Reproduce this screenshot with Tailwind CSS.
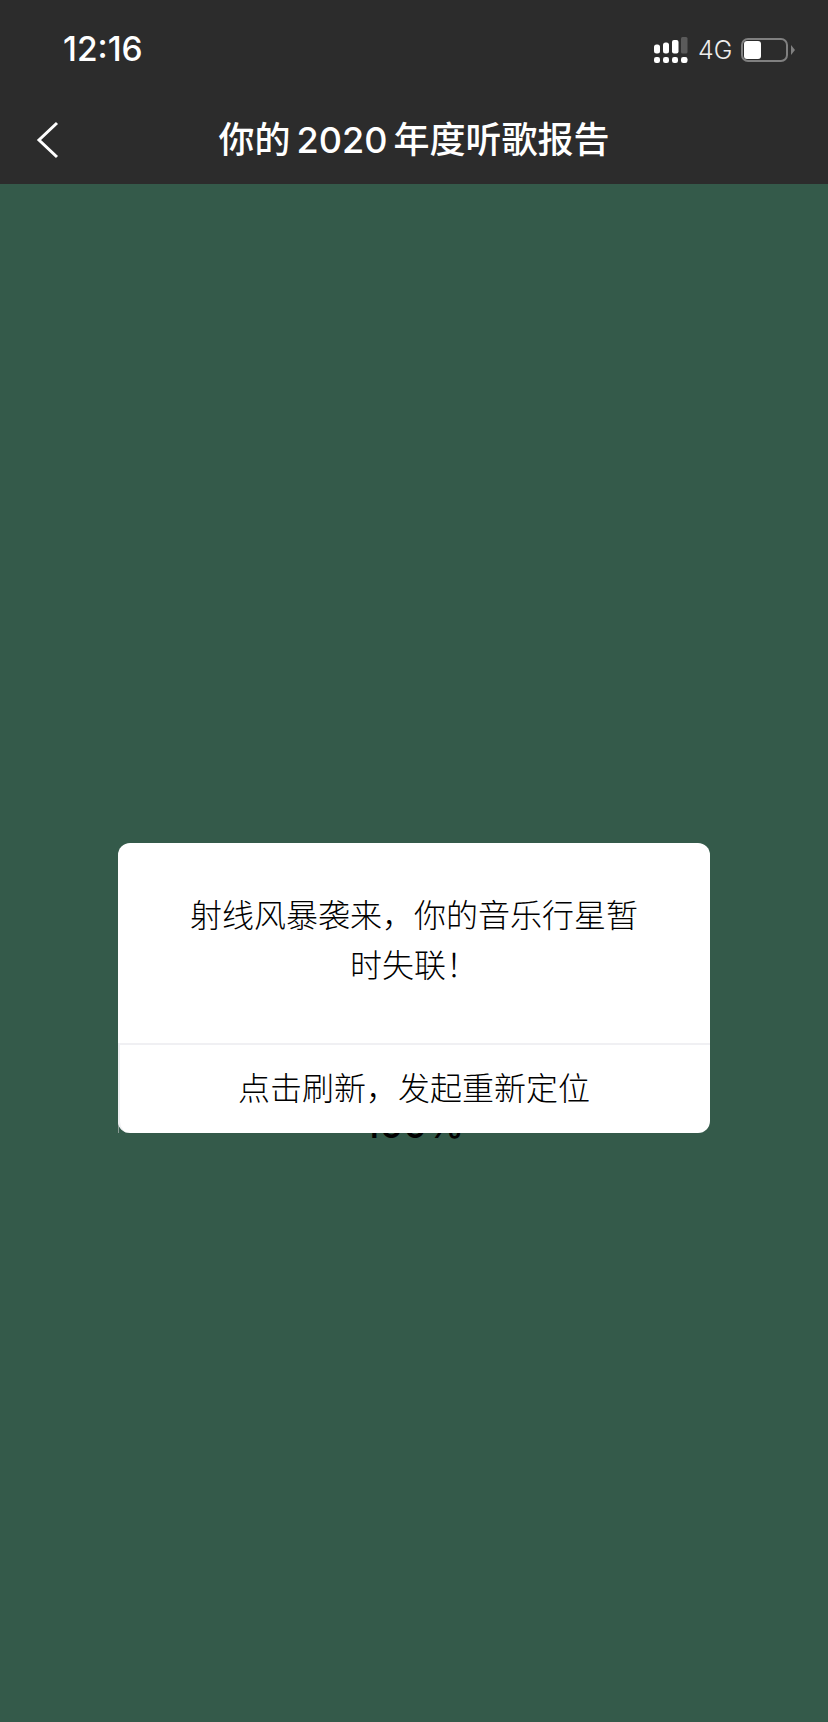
<!DOCTYPE html>
<html lang="zh-CN">
<head>
    <meta charset="UTF-8">
    <meta name="viewport" content="width=device-width, initial-scale=1.0">
    <title>你的2020年度听歌报告</title>
    <script src="https://cdn.jsdelivr.net/npm/@tailwindcss/browser@4"></script>
</head>
<body class="font-['Inter','Noto_Sans_CJK_SC',sans-serif]">
    <div class="w-[828px] h-[1722px] flex flex-col bg-[#345a4a] overflow-hidden">
        <header class="h-[184px] shrink-0 bg-[#2c2c2c] text-white">
            <div class="h-[100px] flex items-center justify-between pl-[63px] pr-[33px]">
                <span class="text-[33.5px] leading-none font-medium">12:16</span>
                <div class="flex items-center">
                    <svg width="34" height="26" viewBox="0 0 34 26" fill="#fff">
                        <rect x="0" y="7.5" width="6" height="9" rx="2.5"/>
                        <rect x="9" y="5.5" width="6" height="11" rx="2.5"/>
                        <rect x="18" y="3" width="6.5" height="13.5" rx="2"/>
                        <rect x="27" y="0" width="6.5" height="16.5" rx="1.5" fill="#5a5a5a"/>
                        <rect x="0" y="20" width="6" height="6" rx="2.2"/>
                        <rect x="9" y="20" width="6" height="6" rx="2.2"/>
                        <rect x="18" y="20" width="6" height="6" rx="2.2"/>
                        <rect x="27" y="20" width="6.5" height="6" rx="2.2"/>
                    </svg>
                    <span class="ml-[10px] w-[32px] text-[25px] leading-none font-light text-[#eeeeee]">4G</span>
                    <div class="ml-[11px] w-[47px] h-[24px] border-[2.5px] border-[#808080] rounded-[7px] p-[1px]">
                        <div class="w-[17px] h-full bg-white rounded-[3px]"></div>
                    </div>
                    <div class="ml-[3px] w-0 h-0 border-y-[5px] border-y-transparent border-l-[4px] border-l-[#808080]"></div>
                </div>
            </div>
            <div class="relative h-[84px] flex items-center justify-center pb-[4px]">
                <svg class="absolute left-[36px] top-[21px]" width="24" height="38" viewBox="0 0 24 38" fill="none" stroke="#fff" stroke-width="3">
                    <path d="M21 2 L3 19 L21 36"/>
                </svg>
                <h1 class="text-[36px] leading-none font-medium">你的<span class="mx-[6px]">2020</span>年度听歌报告</h1>
            </div>
        </header>
        <main class="relative flex-1">
            <p class="absolute left-0 right-0 top-[922px] text-center text-[37px] leading-none font-medium text-black">100%</p>
            <div class="absolute left-[118px] top-[937px] w-px h-[12px] bg-[#8a9a94]"></div>
            <div class="absolute left-[118px] top-[659px] w-[592px] h-[290px] bg-white rounded-[12px] flex flex-col">
                <div class="h-[200px] flex items-center justify-center px-[70px] pb-[5px]">
                    <p class="text-[32px] leading-[50px] font-light text-center text-black">射线风暴袭来，你的音乐行星暂时失联！</p>
                </div>
                <div class="flex-1 border-t-2 border-l-2 border-[#f0f0f3] rounded-bl-[12px] flex items-center justify-center">
                    <span class="text-[32px] leading-none font-light text-black -ml-[2px]">点击刷新，发起重新定位</span>
                </div>
            </div>
        </main>
    </div>
</body>
</html>
